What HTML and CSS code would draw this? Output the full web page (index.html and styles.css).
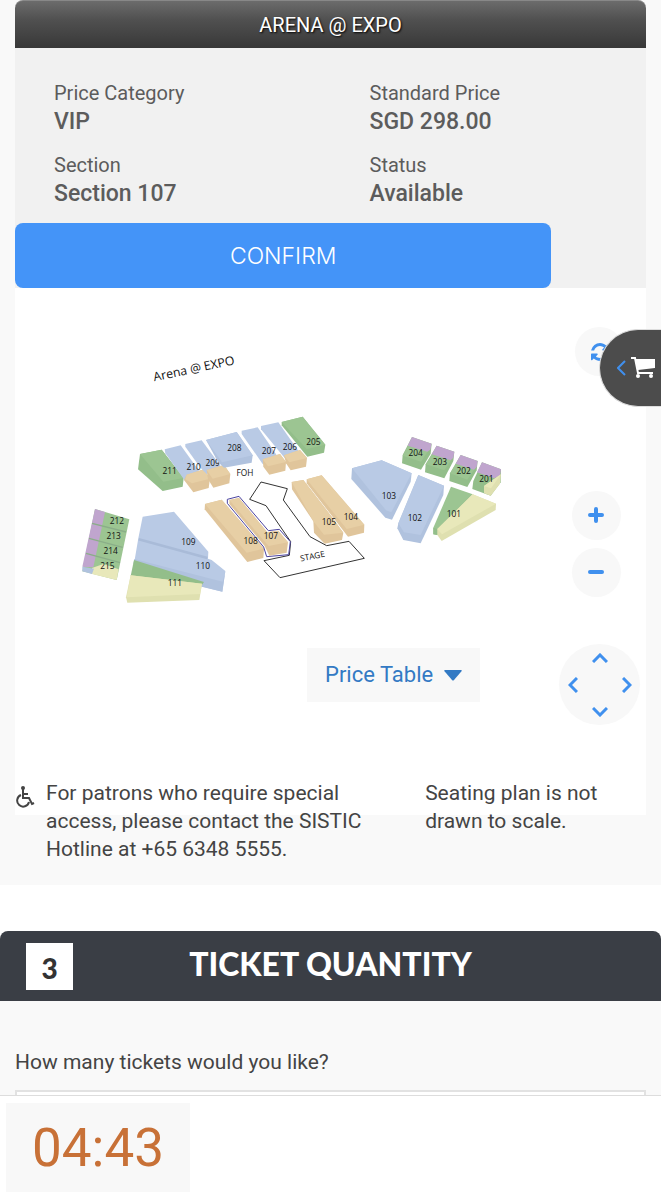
FILE: index.html
```html
<!DOCTYPE html>
<html lang="en">
<head>
    <meta charset="UTF-8">
    <meta name="viewport" content="width=device-width, initial-scale=1.0">
    <title>Arena @ EXPO - Select Seats</title>
    <link rel="stylesheet" href="styles.css">
</head>
<body>
    <main>
        <section class="seat-step">
            <h1 class="venue-title">ARENA @ EXPO</h1>
            <div class="section-panel">
                <dl class="section-info">
                    <div><dt>Price Category</dt><dd>VIP</dd></div>
                    <div><dt>Standard Price</dt><dd>SGD 298.00</dd></div>
                    <div><dt>Section</dt><dd>Section 107</dd></div>
                    <div><dt>Status</dt><dd>Available</dd></div>
                </dl>
                <button type="button" class="confirm-btn">CONFIRM</button>
            </div>

            <div class="seat-map">
                <svg class="map-drawing" viewBox="0 0 1893 1020" role="img" aria-label="Arena @ EXPO seating plan">
                    <text class="map-title" transform="translate(418 280) rotate(-12)">Arena @ EXPO</text>

                    <!-- upper left blocks -->
                    <g transform="translate(165 336)">
                        <polygon class="green-side" points="210,162 275,149 341,234 338,260 278,273 204,208"/>
                        <polygon class="green" points="210,162 275,149 341,234 280,245"/>
                        <polygon class="blue" points="284,148 332,136 388,214 345,242 286,160"/>
                        <polygon class="tan-side" points="350,224 402,208 420,236 416,264 370,277 342,240"/>
                        <polygon class="tan" points="350,224 402,208 420,236 366,250 346,238"/>
                        <polygon class="blue" points="346,132 395,121 452,198 410,222 390,202 346,140"/>
                        <polygon class="tan-side" points="410,210 462,195 481,222 478,250 430,263 414,238"/>
                        <polygon class="tan" points="410,210 462,195 481,222 428,236"/>
                        <text x="299" y="223">211</text>
                        <text x="371" y="211">210</text>
                        <text x="428" y="199">209</text>
                    </g>

                    <!-- upper middle blocks, stage and floor -->
                    <g transform="translate(525 336)">
                        <polygon class="blue-side" points="48,120 140,96 188,166 185,188 102,203 84,186"/>
                        <polygon class="blue" points="48,120 140,96 188,166 96,187"/>
                        <polygon class="blue" points="155,92 203,82 262,168 218,192 155,102"/>
                        <polygon class="tan-side" points="218,178 270,162 288,186 286,212 238,224 220,200"/>
                        <polygon class="tan" points="218,178 270,162 288,186 234,199"/>
                        <polygon class="blue" points="213,78 265,67 325,152 284,174 213,88"/>
                        <polygon class="tan-side" points="282,166 330,150 351,174 348,200 302,211 288,190"/>
                        <polygon class="tan" points="282,166 330,150 351,174 298,187"/>
                        <polygon class="green-side" points="275,66 338,50 406,134 402,158 352,170 275,76"/>
                        <polygon class="green" points="275,66 338,50 406,134 350,147"/>

                        <polygon class="outline" points="213,246 292,266 280,300 360,410 410,437 477,424 523,475 270,533 222,482 298,466 302,425 228,317 179,298"/>
                        <polygon class="tan-side" points="45,312 95,299 222,446 220,474 172,486 44,328"/>
                        <polygon class="tan" points="45,312 95,299 222,446 170,458"/>
                        <polygon class="selected" points="112,298 147,289 235,392 268,388 301,425 296,464 230,470 221,441 112,310"/>
                        <polygon class="tan-side" points="118,300 147,294 232,397 265,392 294,427 290,458 238,467 224,438 118,312"/>
                        <polygon class="tan" points="118,300 147,294 232,397 265,392 294,427 236,438 218,418"/>
                        <polygon class="tan-side" points="305,246 340,240 425,350 460,398 456,420 404,431 372,398 370,364 306,268"/>
                        <polygon class="tan" points="305,246 340,240 425,350 460,398 402,404 370,364"/>
                        <polygon class="tan-side" points="350,238 395,226 523,374 522,398 474,410 350,250"/>
                        <polygon class="tan" points="350,238 395,226 523,374 470,387"/>

                        <text x="133" y="154">208</text>
                        <text x="237" y="163">207</text>
                        <text x="300" y="149">206</text>
                        <text x="370" y="134">205</text>
                        <text x="165" y="227">FOH</text>
                        <text x="182" y="432">108</text>
                        <text x="243" y="416">107</text>
                        <text x="417" y="375">105</text>
                        <text x="483" y="359">104</text>
                        <text transform="translate(369 477) rotate(-11)">STAGE</text>
                    </g>

                    <!-- right blocks -->
                    <g transform="translate(975 411)">
                        <polygon class="blue-side" points="36,130 125,106 215,145 212,170 156,284 136,278 34,162"/>
                        <polygon class="blue" points="36,130 125,106 215,145 154,262 138,256"/>
                        <polygon class="blue-side" points="235,150 312,182 310,210 242,355 190,345 172,310 175,295"/>
                        <polygon class="blue" points="235,150 312,182 242,330 192,322 175,295"/>
                        <polygon class="green" points="333,185 398,208 300,330 292,330 280,328 280,308"/>
                        <polygon class="green-side" points="280,308 292,312 292,330 280,328"/>
                        <polygon class="yellow-side" points="398,208 468,236 467,255 305,348 292,330 292,312"/>
                        <polygon class="yellow" points="398,208 468,236 306,328 292,312"/>

                        <polygon class="green-side" points="216,36 275,56 272,86 243,134 186,115 188,90"/>
                        <polygon class="green" points="204,62 264,78 243,110 188,92"/>
                        <polygon class="purple" points="216,36 275,56 271,74 262,80 203,62"/>
                        <polygon class="green-side" points="290,62 343,80 340,108 313,160 255,142 257,118"/>
                        <polygon class="green" points="276,88 334,104 313,136 257,118"/>
                        <polygon class="purple" points="290,62 343,80 340,98 332,106 275,88"/>
                        <polygon class="green-side" points="362,90 413,108 410,136 382,186 328,168 330,145"/>
                        <polygon class="green" points="348,116 404,132 382,164 330,145"/>
                        <polygon class="purple" points="362,90 413,108 410,126 402,134 347,116"/>
                        <polygon class="green-side" points="426,112 483,133 482,172 452,212 397,192 400,168"/>
                        <polygon class="purple" points="426,112 483,133 480,152 462,160 411,142"/>
                        <polygon class="yellow-side" points="432,183 483,148 480,176 452,212 432,205"/>
                        <polygon class="yellow" points="432,183 483,148 453,190"/>

                        <text x="227" y="93">204</text>
                        <text x="300" y="120">203</text>
                        <text x="371" y="147">202</text>
                        <text x="439" y="171">201</text>
                        <text x="147" y="221">103</text>
                        <text x="225" y="289">102</text>
                        <text x="342" y="277">101</text>
                    </g>

                    <!-- left blocks -->
                    <g transform="translate(165 606)">
                        <polygon class="green" points="75,57 178,88 140,270 37,244"/>
                        <polygon class="purple" points="75,57 105,66 70,232 37,230"/>
                        <polygon class="yellow" points="66,234 100,222 146,238 140,270 66,252"/>
                        <polygon class="blue-side" points="37,230 72,236 66,252 37,244"/>
                        <polyline class="seam" points="66,100 168,126"/>
                        <polyline class="seam" points="57,145 158,172"/>
                        <polyline class="seam" points="48,190 150,218"/>
                        <polygon class="blue" points="218,80 312,65 415,185 414,206 425,210 466,243 457,305 390,288 193,215 205,145"/>
                        <polygon class="blue-side" points="193,207 458,275 466,243 457,305 395,290 190,222"/>
                        <polyline class="blue-seam" points="206,148 412,204"/>
                        <polygon class="green-side" points="192,210 402,276 395,286 182,258"/>
                        <polygon class="yellow-side" points="182,256 396,281 388,330 172,338 168,322"/>
                        <polygon class="yellow" points="182,256 396,281 390,312 170,322"/>
                        <text x="141" y="103">212</text>
                        <text x="131" y="148">213</text>
                        <text x="122" y="193">214</text>
                        <text x="112" y="237">215</text>
                        <text x="355" y="164">109</text>
                        <text x="399" y="238">110</text>
                        <text x="315" y="287">111</text>
                    </g>
                </svg>

                <button type="button" class="price-table-btn">
                    Price Table
                    <svg width="18" height="11" viewBox="0 0 18 11" aria-hidden="true"><path d="M1 0h16q1.500 0 .5 1.300L10 10q-1 1-2 0L.5 1.300Q-.5 0 1 0z" fill="currentColor"/></svg>
                </button>

                <div class="map-controls">
                    <button type="button" class="round-btn" aria-label="Reset map">
                        <svg width="18" height="18" viewBox="0 0 1536 1536" aria-hidden="true"><path fill="currentColor" d="M1511 928q0 5-1 7-64 268-268 434.500t-478 166.500q-146 0-282.500-55t-243.500-157l-129 129q-19 19-45 19t-45-19-19-45v-448q0-26 19-45t45-19h448q26 0 45 19t19 45-19 45l-137 137q71 66 161 102t187 36q134 0 250-65t186-179q11-17 53-117 8-23 30-23h192q13 0 22.500 9.500t9.500 22.500zm25-800v448q0 26-19 45t-45 19h-448q-26 0-45-19t-19-45 19-45l138-138q-148-137-349-137-134 0-250 65t-186 179q-11 17-53 117-8 23-30 23h-199q-13 0-22.500-9.500t-9.500-22.500v-7q65-268 270-434.500t480-166.500q146 0 284 55.500t245 156.500l130-129q19-19 45-19t45 19 19 45z"/></svg>
                    </button>
                    <div class="zoom-controls">
                        <button type="button" class="round-btn" aria-label="Zoom in">
                            <svg width="17" height="17" viewBox="0 0 17 17" aria-hidden="true"><path d="M8 2v12M2 8h12" stroke="currentColor" stroke-width="4" stroke-linecap="round"/></svg>
                        </button>
                        <button type="button" class="round-btn" aria-label="Zoom out">
                            <svg width="17" height="17" viewBox="0 0 17 17" aria-hidden="true"><path d="M2 8h12" stroke="currentColor" stroke-width="4" stroke-linecap="round"/></svg>
                        </button>
                    </div>
                    <div class="pan-controls">
                        <button type="button" class="pan-up" aria-label="Pan up"><svg width="16" height="10" viewBox="0 0 16 10"><path d="M1 9l7-7 7 7"/></svg></button>
                        <button type="button" class="pan-left" aria-label="Pan left"><svg width="10" height="16" viewBox="0 0 10 16"><path d="M9 1L2 8l7 7"/></svg></button>
                        <button type="button" class="pan-right" aria-label="Pan right"><svg width="10" height="16" viewBox="0 0 10 16"><path d="M1 1l7 7-7 7"/></svg></button>
                        <button type="button" class="pan-down" aria-label="Pan down"><svg width="16" height="10" viewBox="0 0 16 10"><path d="M1 1l7 7 7-7"/></svg></button>
                    </div>
                </div>
            </div>

            <div class="map-notes">
                <div class="access-note">
                    <svg width="20" height="23" viewBox="0 0 20 23" aria-hidden="true">
                        <circle cx="8" cy="3" r="2" fill="currentColor"/>
                        <path d="M8 4v9h6l3 6 2-1M8 9h5M6 10a6 6 0 1 0 8 7" fill="none" stroke="currentColor" stroke-width="2"/>
                    </svg>
                    <p>For patrons who require special access, please contact the SISTIC Hotline at +65 6348 5555.</p>
                </div>
                <p>Seating plan is not drawn to scale.</p>
            </div>
        </section>

        <section class="quantity-step">
            <div class="step-header">
                <span class="step-number">3</span>
                <h2>TICKET QUANTITY</h2>
            </div>
            <div class="step-body">
                <label for="quantity">How many tickets would you like?</label>
                <select id="quantity"><option value=""></option><option>1</option><option>2</option><option>3</option><option>4</option></select>
            </div>
        </section>
    </main>

    <button type="button" class="cart-tab" aria-label="Open cart">
        <svg class="cart-arrow" width="9" height="16" viewBox="0 0 9 16" aria-hidden="true"><path d="M8 1L1 8l7 7" fill="none" stroke="currentColor" stroke-width="2"/></svg>
        <svg width="25" height="22" viewBox="0 0 25 22" aria-hidden="true">
            <path d="M0 1h4l3 15h15" fill="none" stroke="currentColor" stroke-width="2"/>
            <path d="M4 2h20v9L7 13z" fill="currentColor"/>
            <circle cx="7" cy="19" r="2" fill="currentColor"/>
            <circle cx="20" cy="19" r="2" fill="currentColor"/>
        </svg>
    </button>

    <footer class="timer-bar">
        <div class="timer" role="timer">04:43</div>
    </footer>
</body>
</html>
```
FILE: styles.css
```css
* {
    box-sizing: border-box;
}
body {
    margin: 0;
    background: #fff;
    color: #444;
    font-family: Roboto, "Liberation Sans", sans-serif;
    font-size: 21px;
    line-height: 28px;
}
p, dl, dd, h1, h2 {
    margin: 0;
}
button {
    border: none;
    padding: 0;
    font-family: inherit;
    cursor: pointer;
}
.seat-step {
    background: #f9f9f9;
    padding: 0 15px 22px;
}
.venue-title {
    height: 48px;
    line-height: 48px;
    text-align: center;
    font-size: 20px;
    font-weight: normal;
    color: #fff;
    text-shadow: 1px 1px 2px #000;
    background: linear-gradient(#6c6c6c, #505050 40%, #383838);
    border-top: 1px solid #888;
    border-radius: 8px 8px 0 0;
}
.section-panel {
    background: #f1f1f1;
}
.section-info {
    display: grid;
    grid-template-columns: 1fr 1fr;
    row-gap: 14px;
    padding: 31px 0 14px;
    color: #5c5c5c;
}
.section-info div {
    padding-left: 39px;
}
.section-info dt {
    font-size: 20px;
}
.section-info dd {
    font-size: 23px;
    line-height: 30px;
    font-weight: 500;
}
.confirm-btn {
    display: block;
    width: 85%;
    height: 65px;
    background: #4494f8;
    color: #fff;
    font-family: Inter, Roboto, sans-serif;
    font-size: 23px;
    font-weight: 300;
    border-radius: 8px;
}
.seat-map {
    position: relative;
    min-height: 527px;
    background: #fff;
}
.map-drawing {
    display: block;
    width: 100%;
}
.map-drawing text {
    font-family: "Open Sans", sans-serif;
    font-size: 25px;
    font-weight: 500;
    text-anchor: middle;
    fill: #111;
}
.map-drawing .map-title {
    font-size: 37px;
    font-weight: 400;
    text-anchor: start;
}
.green { fill: #9cc592; }
.green-side { fill: #93be8a; }
.blue { fill: #b9cae5; }
.blue-side { fill: #b0c2de; }
.tan { fill: #e7cfa5; }
.tan-side { fill: #e0c59b; }
.yellow { fill: #e8e8ba; }
.yellow-side { fill: #dfe0b0; }
.purple { fill: #c0a5ce; }
.outline, .selected {
    fill: #fff;
    stroke: #333;
    stroke-width: 3;
}
.selected {
    stroke: #4b43a0;
}
.seam, .blue-seam {
    fill: none;
    stroke: #8aae88;
    stroke-width: 4;
}
.blue-seam {
    stroke: #a9bbd8;
    stroke-width: 8;
}
.price-table-btn {
    position: absolute;
    left: 292px;
    top: 360px;
    display: flex;
    align-items: center;
    gap: 11px;
    padding: 13px 18px;
    background: #f8f8f8;
    color: #337ac4;
    font-size: 22px;
    line-height: 28px;
}
.map-controls {
    position: absolute;
    top: 39px;
    right: 6px;
    display: flex;
    flex-direction: column;
    align-items: center;
    color: #4090ee;
}
.map-controls button {
    display: flex;
    align-items: center;
    justify-content: center;
    color: inherit;
}
.round-btn {
    width: 49px;
    height: 49px;
    border-radius: 50%;
    background: #f8f8f8;
}
.zoom-controls {
    display: grid;
    gap: 8px;
    margin: 115px 6px 47px 0;
}
.pan-controls {
    display: grid;
    grid-template: 27px 27px 27px / 27px 27px 27px;
    grid-template-areas: ". up ." "left . right" ". down .";
    border-radius: 50%;
    background: #f8f8f8;
}
.pan-controls button {
    background: none;
}
.pan-controls path {
    fill: none;
    stroke: currentColor;
    stroke-width: 3;
}
.pan-up { grid-area: up; }
.pan-left { grid-area: left; }
.pan-right { grid-area: right; }
.pan-down { grid-area: down; }
.map-notes {
    position: relative;
    display: grid;
    grid-template-columns: 65% 35%;
    margin-top: -36px;
}
.access-note {
    display: flex;
    align-items: flex-start;
    gap: 11px;
    padding-right: 48px;
}
.access-note svg {
    flex: none;
    margin-top: 6px;
}
.quantity-step {
    margin-top: 46px;
}
.step-header {
    display: grid;
    grid-template-columns: 47px 1fr 47px;
    align-items: center;
    height: 70px;
    padding: 0 26px;
    background: #3a3e45;
    border-radius: 8px 8px 0 0;
    font-family: Lato, sans-serif;
}
.step-number {
    height: 47px;
    line-height: 50px;
    text-align: center;
    font-size: 28px;
    font-weight: 900;
    color: #333;
    background: #fff;
}
.step-header h2 {
    padding-bottom: 4px;
    text-align: center;
    font-size: 32px;
    font-weight: 900;
    color: #fff;
}
.step-body {
    padding: 47px 15px 0;
    background: #f9f9f9;
}
.step-body label {
    display: block;
    margin-bottom: 14px;
}
.step-body select {
    display: block;
    width: 100%;
    height: 50px;
    border: 2px solid #e2e2e2;
    background: #fff;
    font-size: 20px;
}
.cart-tab {
    position: fixed;
    top: 329px;
    right: 0;
    display: flex;
    align-items: center;
    gap: 5px;
    width: 62px;
    height: 78px;
    padding-left: 17px;
    background: #4c4c4c;
    border: 1px solid #ddd;
    border-right: none;
    border-radius: 39px 0 0 39px;
    color: #fff;
}
.cart-tab svg {
    flex: none;
}
.cart-arrow {
    color: #4090ee;
}
.timer-bar {
    position: fixed;
    left: 0;
    right: 0;
    bottom: 0;
    padding: 7px 6px 8px;
    background: #fff;
    border-top: 1px solid #ddd;
}
.timer {
    width: 184px;
    height: 89px;
    line-height: 91px;
    text-align: center;
    font-size: 53px;
    color: #c87137;
    background: #f8f8f8;
}
```
